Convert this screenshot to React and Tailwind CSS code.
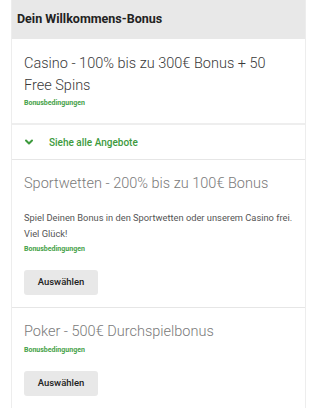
import { ChevronDown } from 'lucide-react';

const Terms = ({ className = '' }) => (
  <div className={`text-[7px] leading-[10px] font-bold text-[#45a148] ${className}`}>Bonusbedingungen</div>
);

const SelectButton = () => (
  <button className="mt-4 w-[74px] h-[25px] rounded-[3px] bg-[#e8e8e8] text-[9.5px] font-medium text-[#222]">
    Auswählen
  </button>
);

const App = () => {
  return (
    <div className="min-h-screen bg-white" style={{ fontFamily: 'Roboto, "Liberation Sans", sans-serif' }}>
      <div className="mx-[11px] border-x border-[#ededed]">
        <div className="h-[39px] bg-[#e8e8e8] flex items-center px-[5px]">
          <h2 className="text-[12.5px] font-bold text-[#222]">Dein Willkommens-Bonus</h2>
        </div>

        <div className="bg-white px-3 pt-[14px] pb-[15px] border-b-2 border-[#eeeeee]">
          <h3 className="text-[14.5px] leading-[22px] font-light text-[#3a3a3a]">
            Casino - 100% bis zu 300€ Bonus + 50 Free Spins
          </h3>
          <Terms className="mt-[1px]" />
        </div>

        <div className="h-[35px] flex items-center px-3 border-b border-[#e6e6e6]">
          <ChevronDown size={12} strokeWidth={4} className="text-[#3d9a3d] ml-[-1px]" />
          <span className="ml-[14px] text-[10px] font-medium text-[#3d9a3d]">Siehe alle Angebote</span>
        </div>

        <div className="pl-3 pr-2 pt-[13px] pb-3 border-b border-[#e6e6e6]">
          <h3 className="text-[14.5px] leading-[22px] font-light text-[#7a7a7a]">
            Sportwetten - 200% bis zu 100€ Bonus
          </h3>
          <p className="mt-[15px] text-[9.3px] leading-4 text-[#555]">
            Spiel Deinen Bonus in den Sportwetten oder unserem Casino frei. Viel Glück!
          </p>
          <Terms className="mt-[2px]" />
          <SelectButton />
        </div>

        <div className="px-3 pt-[13px] pb-3">
          <h3 className="text-[14.5px] leading-[22px] font-light text-[#7a7a7a]">
            Poker - 500€ Durchspielbonus
          </h3>
          <Terms className="mt-[2px]" />
          <SelectButton />
        </div>
      </div>
    </div>
  );
};

export default App;
